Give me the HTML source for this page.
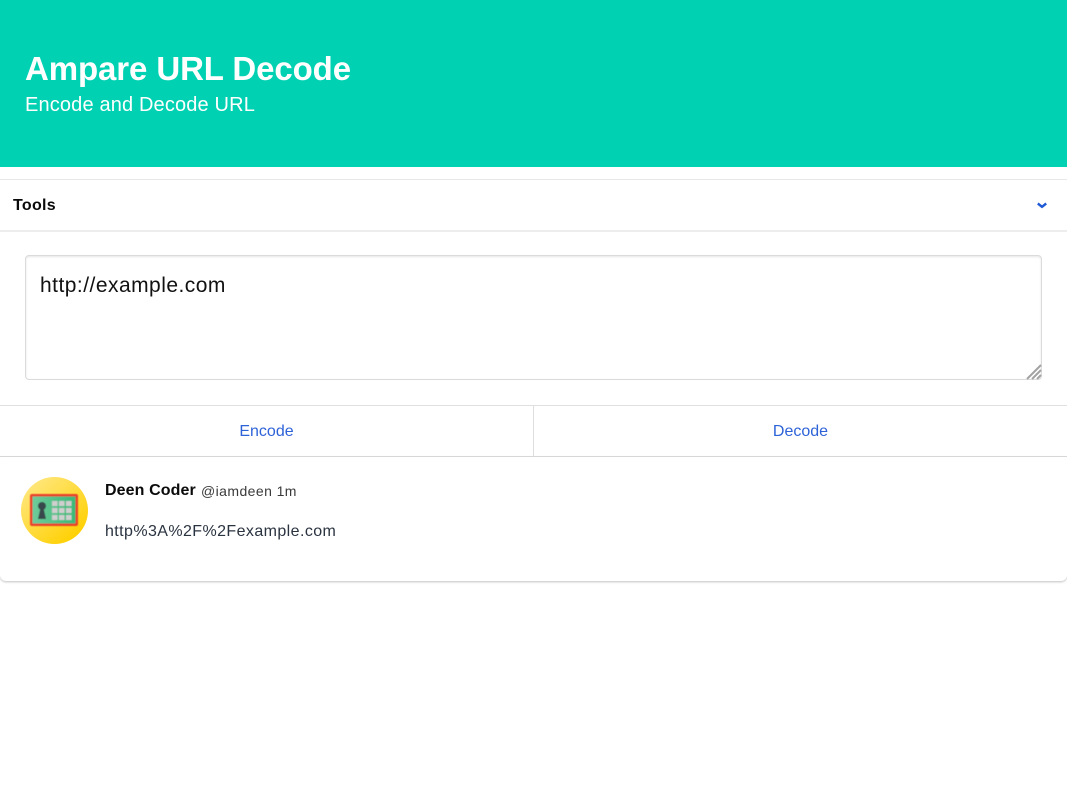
<!DOCTYPE html>
<html lang="en">
<head>
<meta charset="utf-8">
<title>Ampare URL Decode</title>
<style>
html,body{margin:0;padding:0;background:#fff;}
body{width:1067px;height:800px;position:relative;overflow:hidden;font-family:"Liberation Sans",sans-serif;color:#0a0a0a;}
.a{position:absolute;white-space:nowrap;}
.hero{left:0;top:0;width:1067px;height:167px;background:#00d1b2;}
.line{background:#e8e8e8;}
textarea{position:absolute;left:25px;top:255px;width:1017px;height:125px;box-sizing:border-box;border:1px solid #dbdbdb;border-radius:4px;padding:16px 14px;margin:0;font:21px/28px "Liberation Sans",sans-serif;letter-spacing:.47px;color:#111;background:#fff;outline:none;resize:none;box-shadow:inset 0 1px 2px rgba(10,10,10,.1);}
.card{left:0;top:457px;width:1067px;height:124px;background:#fff;border-radius:0 0 6px 6px;box-shadow:0 1px 2px rgba(10,10,10,.25);}
</style>
</head>
<body>
<div class="a hero"></div>
<div class="a" style="left:25px;top:50px;font-size:33px;line-height:38px;font-weight:700;color:#fff;letter-spacing:-.1px;">Ampare URL Decode</div>
<div class="a" style="left:25px;top:93px;font-size:20px;line-height:24px;color:#fff;letter-spacing:.15px;">Encode and Decode URL</div>

<div class="a line" style="left:0;top:179px;width:1067px;height:1px;"></div>
<div class="a" style="left:13px;top:197px;font-size:16px;line-height:18px;font-weight:700;color:#0a0a0a;letter-spacing:.3px;">Tools</div>
<svg class="a" style="left:1035px;top:199px;" width="14" height="12" viewBox="0 0 14 12"><path d="M2.800 4.500 L7 7.800 L11.200 4.500" fill="none" stroke="#1f5ad6" stroke-width="2.400"/></svg>
<div class="a line" style="left:0;top:230px;width:1067px;height:2px;background:#ededed;"></div>

<textarea>http://example.com</textarea>
<svg class="a" style="left:1026px;top:364px;" width="16" height="16" viewBox="0 0 16 16"><path d="M1 15 L15 1 M6 15 L15 6 M11 15 L15 11" fill="none" stroke="#a2a2a2" stroke-width="2"/></svg>

<div class="a line" style="left:0;top:405px;width:1067px;height:1px;background:#e0e0e0;"></div>
<div class="a line" style="left:533px;top:406px;width:1px;height:50px;background:#dedede;"></div>
<div class="a" style="left:0;top:422px;width:533px;text-align:center;font-size:16px;line-height:20px;color:#2e63d8;">Encode</div>
<div class="a" style="left:534px;top:422px;width:533px;text-align:center;font-size:16px;line-height:20px;color:#2e63d8;">Decode</div>
<div class="a line" style="left:0;top:456px;width:1067px;height:1px;background:#dcdcdc;"></div>

<div class="a card"></div>
<svg class="a" style="left:21px;top:477px;" width="67" height="67" viewBox="0 0 67 67">
<defs>
<linearGradient id="g" x1="0.15" y1="0.1" x2="0.85" y2="0.9"><stop offset="0" stop-color="#ffe67a"/><stop offset="1" stop-color="#ffd000"/></linearGradient>
<linearGradient id="h" x1="0" y1="0" x2="1" y2="0"><stop offset="0" stop-color="#6fcb9a"/><stop offset="1" stop-color="#38b878"/></linearGradient>
<filter id="b"><feGaussianBlur stdDeviation=".4"/></filter>
</defs>
<circle cx="33.500" cy="33.500" r="33.500" fill="url(#g)"/>
<g filter="url(#b)">
<rect x="9" y="17" width="48" height="32" rx="2" fill="#e8412a"/>
<rect x="11.500" y="19.500" width="43" height="27" fill="url(#h)"/>
<circle cx="21" cy="29" r="4" fill="#38464c"/>
<path d="M19.500 31 L22.500 31 L25 42 L17 42 Z" fill="#38464c"/>
<g fill="#cfcfcf"><rect x="31" y="24" width="5.500" height="5"/><rect x="38" y="24" width="5.500" height="5"/><rect x="45" y="24" width="5.500" height="5"/><rect x="31" y="31" width="5.500" height="5"/><rect x="38" y="31" width="5.500" height="5"/><rect x="45" y="31" width="5.500" height="5"/><rect x="31" y="38" width="5.500" height="5"/><rect x="38" y="38" width="5.500" height="5"/><rect x="45" y="38" width="5.500" height="5"/></g>
</g>
</svg>
<div class="a" style="left:105px;top:482px;font-size:16px;line-height:18px;font-weight:700;color:#0a0a0a;letter-spacing:.1px;">Deen Coder</div>
<div class="a" style="left:201px;top:482px;font-size:14px;line-height:18px;color:#3a3a3a;letter-spacing:.42px;">@iamdeen 1m</div>
<div class="a" style="left:105px;top:523px;font-size:16px;line-height:18px;color:#2a3340;letter-spacing:.41px;">http%3A%2F%2Fexample.com</div>
</body>
</html>
